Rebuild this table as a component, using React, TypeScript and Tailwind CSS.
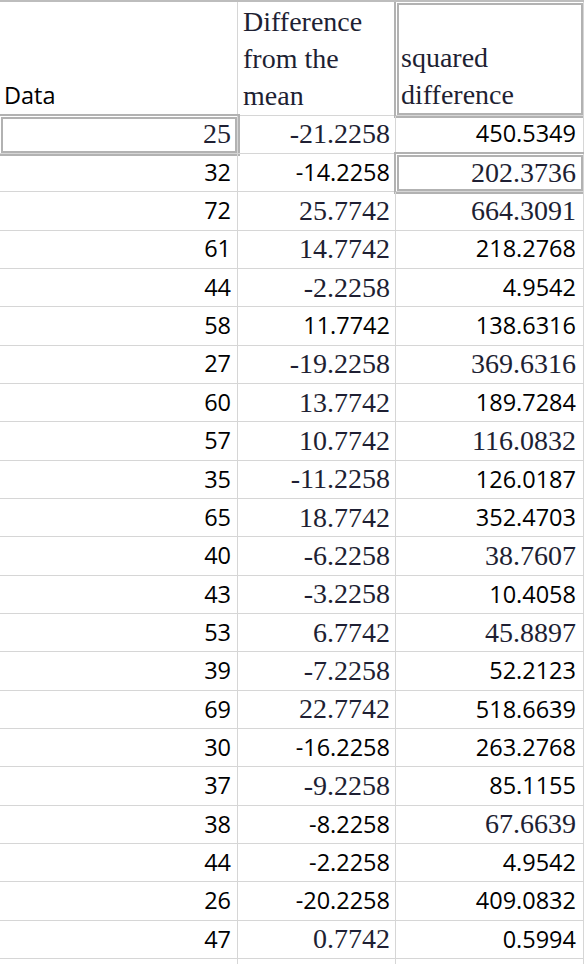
import React from "react";

type F = "s" | "t";

const data: [string, F, string, F, string, F][] = [
  ["25", "t", "-21.2258", "t", "450.5349", "s"],
  ["32", "s", "-14.2258", "s", "202.3736", "t"],
  ["72", "s", "25.7742", "t", "664.3091", "t"],
  ["61", "s", "14.7742", "t", "218.2768", "s"],
  ["44", "s", "-2.2258", "t", "4.9542", "s"],
  ["58", "s", "11.7742", "s", "138.6316", "s"],
  ["27", "s", "-19.2258", "t", "369.6316", "t"],
  ["60", "s", "13.7742", "t", "189.7284", "s"],
  ["57", "s", "10.7742", "t", "116.0832", "t"],
  ["35", "s", "-11.2258", "t", "126.0187", "s"],
  ["65", "s", "18.7742", "t", "352.4703", "s"],
  ["40", "s", "-6.2258", "t", "38.7607", "t"],
  ["43", "s", "-3.2258", "t", "10.4058", "s"],
  ["53", "s", "6.7742", "t", "45.8897", "t"],
  ["39", "s", "-7.2258", "t", "52.2123", "s"],
  ["69", "s", "22.7742", "t", "518.6639", "s"],
  ["30", "s", "-16.2258", "s", "263.2768", "s"],
  ["37", "s", "-9.2258", "t", "85.1155", "s"],
  ["38", "s", "-8.2258", "s", "67.6639", "t"],
  ["44", "s", "-2.2258", "s", "4.9542", "s"],
  ["26", "s", "-20.2258", "s", "409.0832", "s"],
  ["47", "s", "0.7742", "t", "0.5994", "s"],
];

const SANS = "font-['Open_Sans',sans-serif] font-[500] text-[23.5px] text-black";
const SERIF = "font-['Liberation_Serif',serif] text-[28px] text-[#1e1f33]";
const SEL = "outline-[5px] outline-double outline-[#b2b2b2] outline-offset-[-3px]";

const cellBase = "flex items-center justify-end leading-none border-b border-r border-[#d6d6d6]";

function Cell({ text, f, w, pr, sel }: { text: string; f: F; w: string; pr: string; sel?: boolean }) {
  return (
    <div className={`${cellBase} ${w} ${pr} ${sel ? SEL : ""}`}>
      <span className={f === "s" ? SANS : SERIF}>{text}</span>
    </div>
  );
}

export default function App() {
  return (
    <div className="w-[584px] h-[964px] overflow-hidden bg-white border-t-2 border-[#bdbdbd]">
      {/* header */}
      <div className="flex h-[113.5px]">
        <div className="w-[238px] flex items-end border-b border-r border-[#d6d6d6] pl-[4px] pb-[5px]">
          <span className="font-['Open_Sans',sans-serif] font-[500] text-[23.5px] leading-[30px] text-black">Data</span>
        </div>
        <div className="w-[158px] flex items-end border-b border-r border-[#d6d6d6] pl-[5px] pb-[1px]">
          <span className="font-['Liberation_Serif',serif] text-[28px] leading-[37px] text-[#1e1f33]">
            Difference
            <br />
            from the
            <br />
            mean
          </span>
        </div>
        <div className={`w-[188px] flex items-end border-b border-r border-[#d6d6d6] pl-[5px] pb-[2px] ${SEL}`}>
          <span className="font-['Liberation_Serif',serif] text-[28px] leading-[37px] text-[#1e1f33]">
            squared
            <br />
            difference
          </span>
        </div>
      </div>
      {/* rows */}
      {data.map((r, i) => (
        <div key={i} className="flex h-[38.35px]">
          <Cell text={r[0]} f={r[1]} w="w-[238px]" pr="pr-[6px]" sel={i === 0} />
          <Cell text={r[2]} f={r[3]} w="w-[158px]" pr="pr-[5px]" />
          <Cell text={r[4]} f={r[5]} w="w-[188px]" pr="pr-[7px]" sel={i === 1} />
        </div>
      ))}
      <div className="flex h-[38.35px]">
        <div className="w-[238px] border-r border-[#d6d6d6]" />
        <div className="w-[158px] border-r border-[#d6d6d6]" />
        <div className="w-[188px] border-r border-[#d6d6d6]" />
      </div>
    </div>
  );
}
